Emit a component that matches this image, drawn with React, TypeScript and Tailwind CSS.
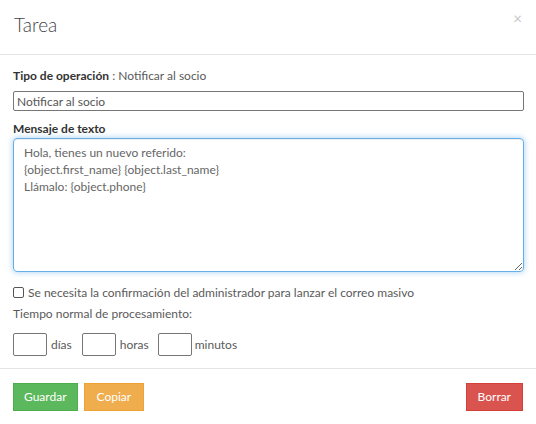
import React from "react";

export default function App() {
  const font = { fontFamily: "Lato, 'Open Sans', Arial, sans-serif" };

  return (
    <div className="w-[536px] h-[424px] bg-white text-[#5a5a5a] text-[12px]" style={font}>
      {/* header */}
      <div className="h-[55px] border-b border-[#e5e5e5] flex items-start justify-between pl-[14px] pr-[14px]">
        <h4 className="text-[19px] font-light text-[#444] mt-[13px] leading-[24px]">Tarea</h4>
        <span className="text-[#c8c8c8] text-[15px] mt-[9px] leading-[18px]">×</span>
      </div>

      {/* body */}
      <div className="px-[13px] pt-[12px]">
        <div className="leading-[17px]">
          <span className="font-bold text-[#333]">Tipo de operación</span> : Notificar al socio
        </div>
        <input
          defaultValue="Notificar al socio"
          className="mt-[7px] w-[511px] h-[20px] border border-[#767676] rounded-[2px] px-[3px] text-[12px] text-[#555] outline-none"
        />
        <div className="mt-[9px] font-bold text-[#333] leading-[17px]">Mensaje de texto</div>
        <textarea
          defaultValue={"Hola, tienes un nuevo referido:\n{object.first_name} {object.last_name}\nLlámalo: {object.phone}"}
          className="mt-[1px] block w-[511px] h-[134px] border border-[#66afe9] rounded-[4px] pl-[10px] pt-[5px] leading-[17px] text-[12px] text-[#666] outline-none shadow-[inset_0_1px_1px_rgba(0,0,0,.075),0_0_6px_rgba(102,175,233,.6)]"
        />
        <label className="mt-[12px] flex items-center gap-[4px] leading-[17px]">
          <span className="w-[11px] h-[11px] border border-[#555] rounded-[2px] bg-white" />
          Se necesita la confirmación del administrador para lanzar el correo masivo
        </label>
        <div className="mt-[4px] leading-[17px]">Tiempo normal de procesamiento:</div>
        <div className="mt-[11px] flex items-center h-[23px]">
          <input className="w-[34px] h-[23px] border border-[#767676] rounded-[2px] outline-none" />
          <span className="ml-[4px] mr-[10px]">días</span>
          <input className="w-[34px] h-[23px] border border-[#767676] rounded-[2px] outline-none" />
          <span className="ml-[4px] mr-[9px]">horas</span>
          <input className="w-[34px] h-[23px] border border-[#767676] rounded-[2px] outline-none" />
          <span className="ml-[3px]">minutos</span>
        </div>
      </div>

      {/* footer */}
      <div className="mt-[12px] border-t border-[#e5e5e5] px-[13px] pt-[14px] flex items-center">
        <button className="h-[28px] px-[10px] bg-[#5cb85c] border border-[#4cae4c] text-white text-[12px]">
          Guardar
        </button>
        <button className="ml-[6px] h-[28px] px-[12px] bg-[#f0ad4e] border border-[#eea236] text-white text-[12px]">
          Copiar
        </button>
        <button className="ml-auto h-[28px] px-[11px] bg-[#d9534f] border border-[#d43f3a] text-white text-[12px]">
          Borrar
        </button>
      </div>
    </div>
  );
}
